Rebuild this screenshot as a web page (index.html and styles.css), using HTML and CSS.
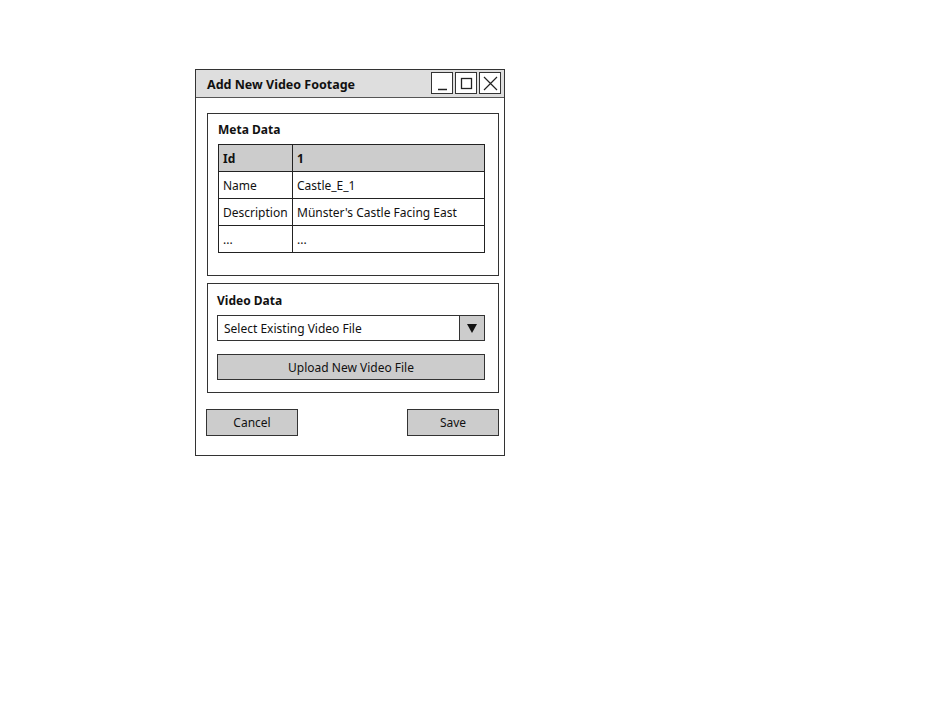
FILE: index.html
```html
<!DOCTYPE html>
<html>
<head>
<meta charset="utf-8">
<link rel="stylesheet" href="styles.css">
</head>
<body>
<div class="window">
  <div class="titlebar">
    <span class="title">Add New Video Footage</span>
    <div class="controls">
      <div class="ctl"><svg width="19" height="19" viewBox="0 0 19 19"><line x1="5" y1="15.5" x2="14" y2="15.5" stroke="#222" stroke-width="1.5"/></svg></div>
      <div class="ctl"><svg width="19" height="19" viewBox="0 0 19 19"><rect x="4.5" y="4.5" width="10" height="10" fill="none" stroke="#222" stroke-width="1.3"/></svg></div>
      <div class="ctl"><svg width="19" height="19" viewBox="0 0 19 19"><path d="M3 3 L16 16 M16 3 L3 16" stroke="#222" stroke-width="1.2"/></svg></div>
    </div>
  </div>
  <div class="content">
    <div class="group meta">
      <div class="label">Meta Data</div>
      <table class="grid">
        <tr class="head"><td class="c1">Id</td><td>1</td></tr>
        <tr><td class="c1">Name</td><td>Castle_E_1</td></tr>
        <tr><td class="c1">Description</td><td>Münster's Castle Facing East</td></tr>
        <tr><td class="c1">...</td><td>...</td></tr>
      </table>
    </div>
    <div class="group video">
      <div class="label">Video Data</div>
      <div class="select">
        <span class="sel-text">Select Existing Video File</span>
        <span class="sel-arrow"><svg width="10" height="9" viewBox="0 0 10 9"><path d="M0 0 H10 L5 9 Z" fill="#111"/></svg></span>
      </div>
      <div class="btn upload">Upload New Video File</div>
    </div>
    <div class="actions">
      <div class="btn small">Cancel</div>
      <div class="btn small">Save</div>
    </div>
  </div>
</div>
</body>
</html>
```

FILE: styles.css
```css
* { box-sizing: border-box; }
body {
  margin: 0;
  background: #fff;
  font-family: "Comic Sans MS", "Noto Sans", "Open Sans", sans-serif;
  font-size: 12px;
  color: #111;
}
.window {
  margin: 69px 0 0 195px;
  width: 310px;
  height: 387px;
  border: 1px solid #333;
  background: #fff;
}
.titlebar {
  height: 28px;
  background: #dedede;
  border-bottom: 1px solid #555;
  display: flex;
  align-items: center;
  justify-content: space-between;
  padding: 0 3px 0 11px;
}
.title {
  font-weight: bold;
  font-size: 12.5px;
  padding-top: 2px;
}
.controls {
  display: flex;
  gap: 2px;
  margin-top: -1px;
}
.ctl {
  width: 22px;
  height: 22px;
  border: 1px solid #333;
  background: #fff;
  display: flex;
  align-items: center;
  justify-content: center;
}
.content {
  padding: 15px 0 0 11px;
}
.group {
  width: 292px;
  border: 1px solid #333;
}
.meta {
  height: 163px;
  padding: 8px 0 0 10px;
}
.label {
  font-weight: bold;
  font-size: 12px;
  height: 22px;
  line-height: 16px;
}
.grid {
  border-collapse: collapse;
  width: 267px;
  font-size: 12px;
}
.grid td {
  border: 1px solid #222;
  height: 27px;
  padding: 0 0 0 4px;
  white-space: nowrap;
}
.grid td.c1 { width: 74px; }
.grid tr.head td {
  background: #cccccc;
  font-weight: bold;
}
.video {
  margin-top: 7px;
  height: 110px;
  padding: 9px 0 0 9px;
}
.select {
  width: 268px;
  height: 26px;
  border: 1px solid #333;
  display: flex;
  align-items: stretch;
}
.sel-text {
  flex: 1;
  padding-left: 6px;
  display: flex;
  align-items: center;
}
.sel-arrow {
  width: 25px;
  background: #cccccc;
  border-left: 1px solid #333;
  display: flex;
  align-items: center;
  justify-content: center;
}
.btn {
  background: #cccccc;
  border: 1px solid #333;
  display: flex;
  align-items: center;
  justify-content: center;
}
.upload {
  width: 268px;
  height: 26px;
  margin-top: 13px;
}
.actions {
  display: flex;
  justify-content: space-between;
  width: 293px;
  margin: 16px 0 0 -1px;
}
.btn.small {
  width: 92px;
  height: 27px;
}
```
